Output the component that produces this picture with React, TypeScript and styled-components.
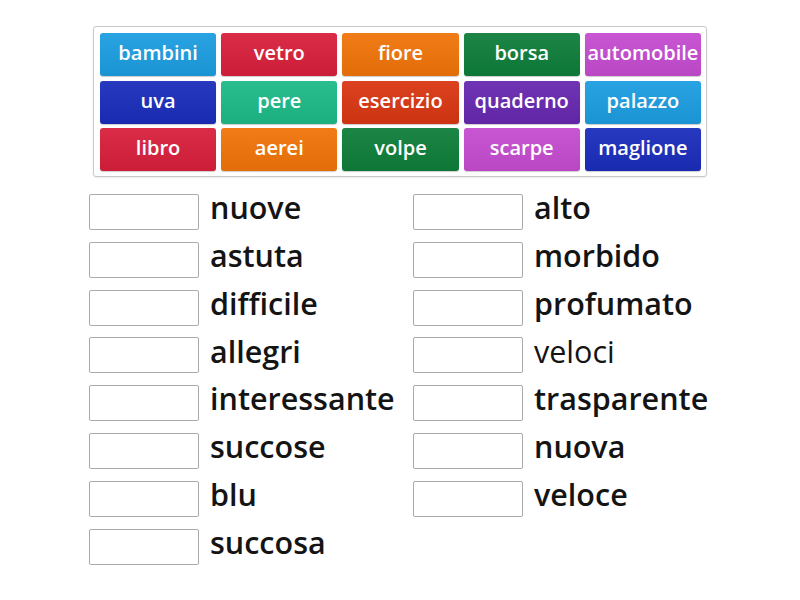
import styled, { createGlobalStyle } from 'styled-components';

const GlobalStyle = createGlobalStyle`
	body {
		margin: 0;
		background: #ffffff;
		font-family: 'Open Sans', 'Liberation Sans', sans-serif;
	}
`;

const Page = styled.div`
	width: 800px;
	height: 600px;
	display: flex;
	flex-direction: column;
	align-items: center;
	padding-top: 26px;
	box-sizing: border-box;
`;

const TileBoard = styled.div`
	width: 614px;
	box-sizing: border-box;
	border: 1px solid #c8c8c8;
	border-radius: 3px;
	padding: 6px 5px 5px 6px;
	display: grid;
	grid-template-columns: repeat(5, 1fr);
	grid-auto-rows: 43px;
	column-gap: 5px;
	row-gap: 4.5px;
	box-shadow: 0 1px 2px rgba(0, 0, 0, 0.08);
`;

const Tile = styled.div<{ $bg: string }>`
	display: flex;
	align-items: center;
	justify-content: center;
	padding-bottom: 4px;
	box-sizing: border-box;
	border-radius: 3px;
	background: ${(p) => p.$bg};
	background-image: linear-gradient(rgba(255, 255, 255, 0.06), rgba(0, 0, 0, 0.06));
	box-shadow: 0 1px 1px rgba(0, 0, 0, 0.2);
	color: #ffffff;
	font-weight: 600;
	font-size: 20px;
	white-space: nowrap;
`;

const Columns = styled.div`
	width: 800px;
	display: grid;
	grid-template-columns: 324px 1fr;
	padding-left: 89px;
	padding-top: 17px;
	box-sizing: border-box;
`;

const List = styled.div`
	display: flex;
	flex-direction: column;
	gap: 11.8px;
`;

const Row = styled.div`
	display: flex;
	align-items: center;
	height: 36px;
`;

const Slot = styled.div`
	width: 110px;
	height: 36px;
	box-sizing: border-box;
	border: 1px solid #aaaaaa;
	border-radius: 2px;
	background: #ffffff;
	flex-shrink: 0;
`;

const Word = styled.span<{ $light?: boolean }>`
	margin-left: 11px;
	font-size: 30.5px;
	font-weight: ${(p) => (p.$light ? 400 : 600)};
	color: #141414;
	white-space: nowrap;
	line-height: 1;
	position: relative;
	top: -4.5px;
`;

const tiles: [string, string][] = [
	['bambini', '#1c9de0'],
	['vetro', '#d81f3c'],
	['fiore', '#f07409'],
	['borsa', '#0e7e3a'],
	['automobile', '#c54bcf'],
	['uva', '#1a2dbb'],
	['pere', '#1db987'],
	['esercizio', '#d93612'],
	['quaderno', '#6628b0'],
	['palazzo', '#1c9de0'],
	['libro', '#d81f3c'],
	['aerei', '#f07409'],
	['volpe', '#0e7e3a'],
	['scarpe', '#c54bcf'],
	['maglione', '#1a2dbb']
];

const left = ['nuove', 'astuta', 'difficile', 'allegri', 'interessante', 'succose', 'blu', 'succosa'];
const right = ['alto', 'morbido', 'profumato', 'veloci', 'trasparente', 'nuova', 'veloce'];

export default function App() {
	return (
		<>
			<GlobalStyle />
			<Page>
				<TileBoard>
					{tiles.map(([word, bg]) => (
						<Tile key={word} $bg={bg}>
							{word}
						</Tile>
					))}
				</TileBoard>
				<Columns>
					<List>
						{left.map((w) => (
							<Row key={w}>
								<Slot />
								<Word>{w}</Word>
							</Row>
						))}
					</List>
					<List>
						{right.map((w) => (
							<Row key={w}>
								<Slot />
								<Word $light={w === 'veloci'}>{w}</Word>
							</Row>
						))}
					</List>
				</Columns>
			</Page>
		</>
	);
}
